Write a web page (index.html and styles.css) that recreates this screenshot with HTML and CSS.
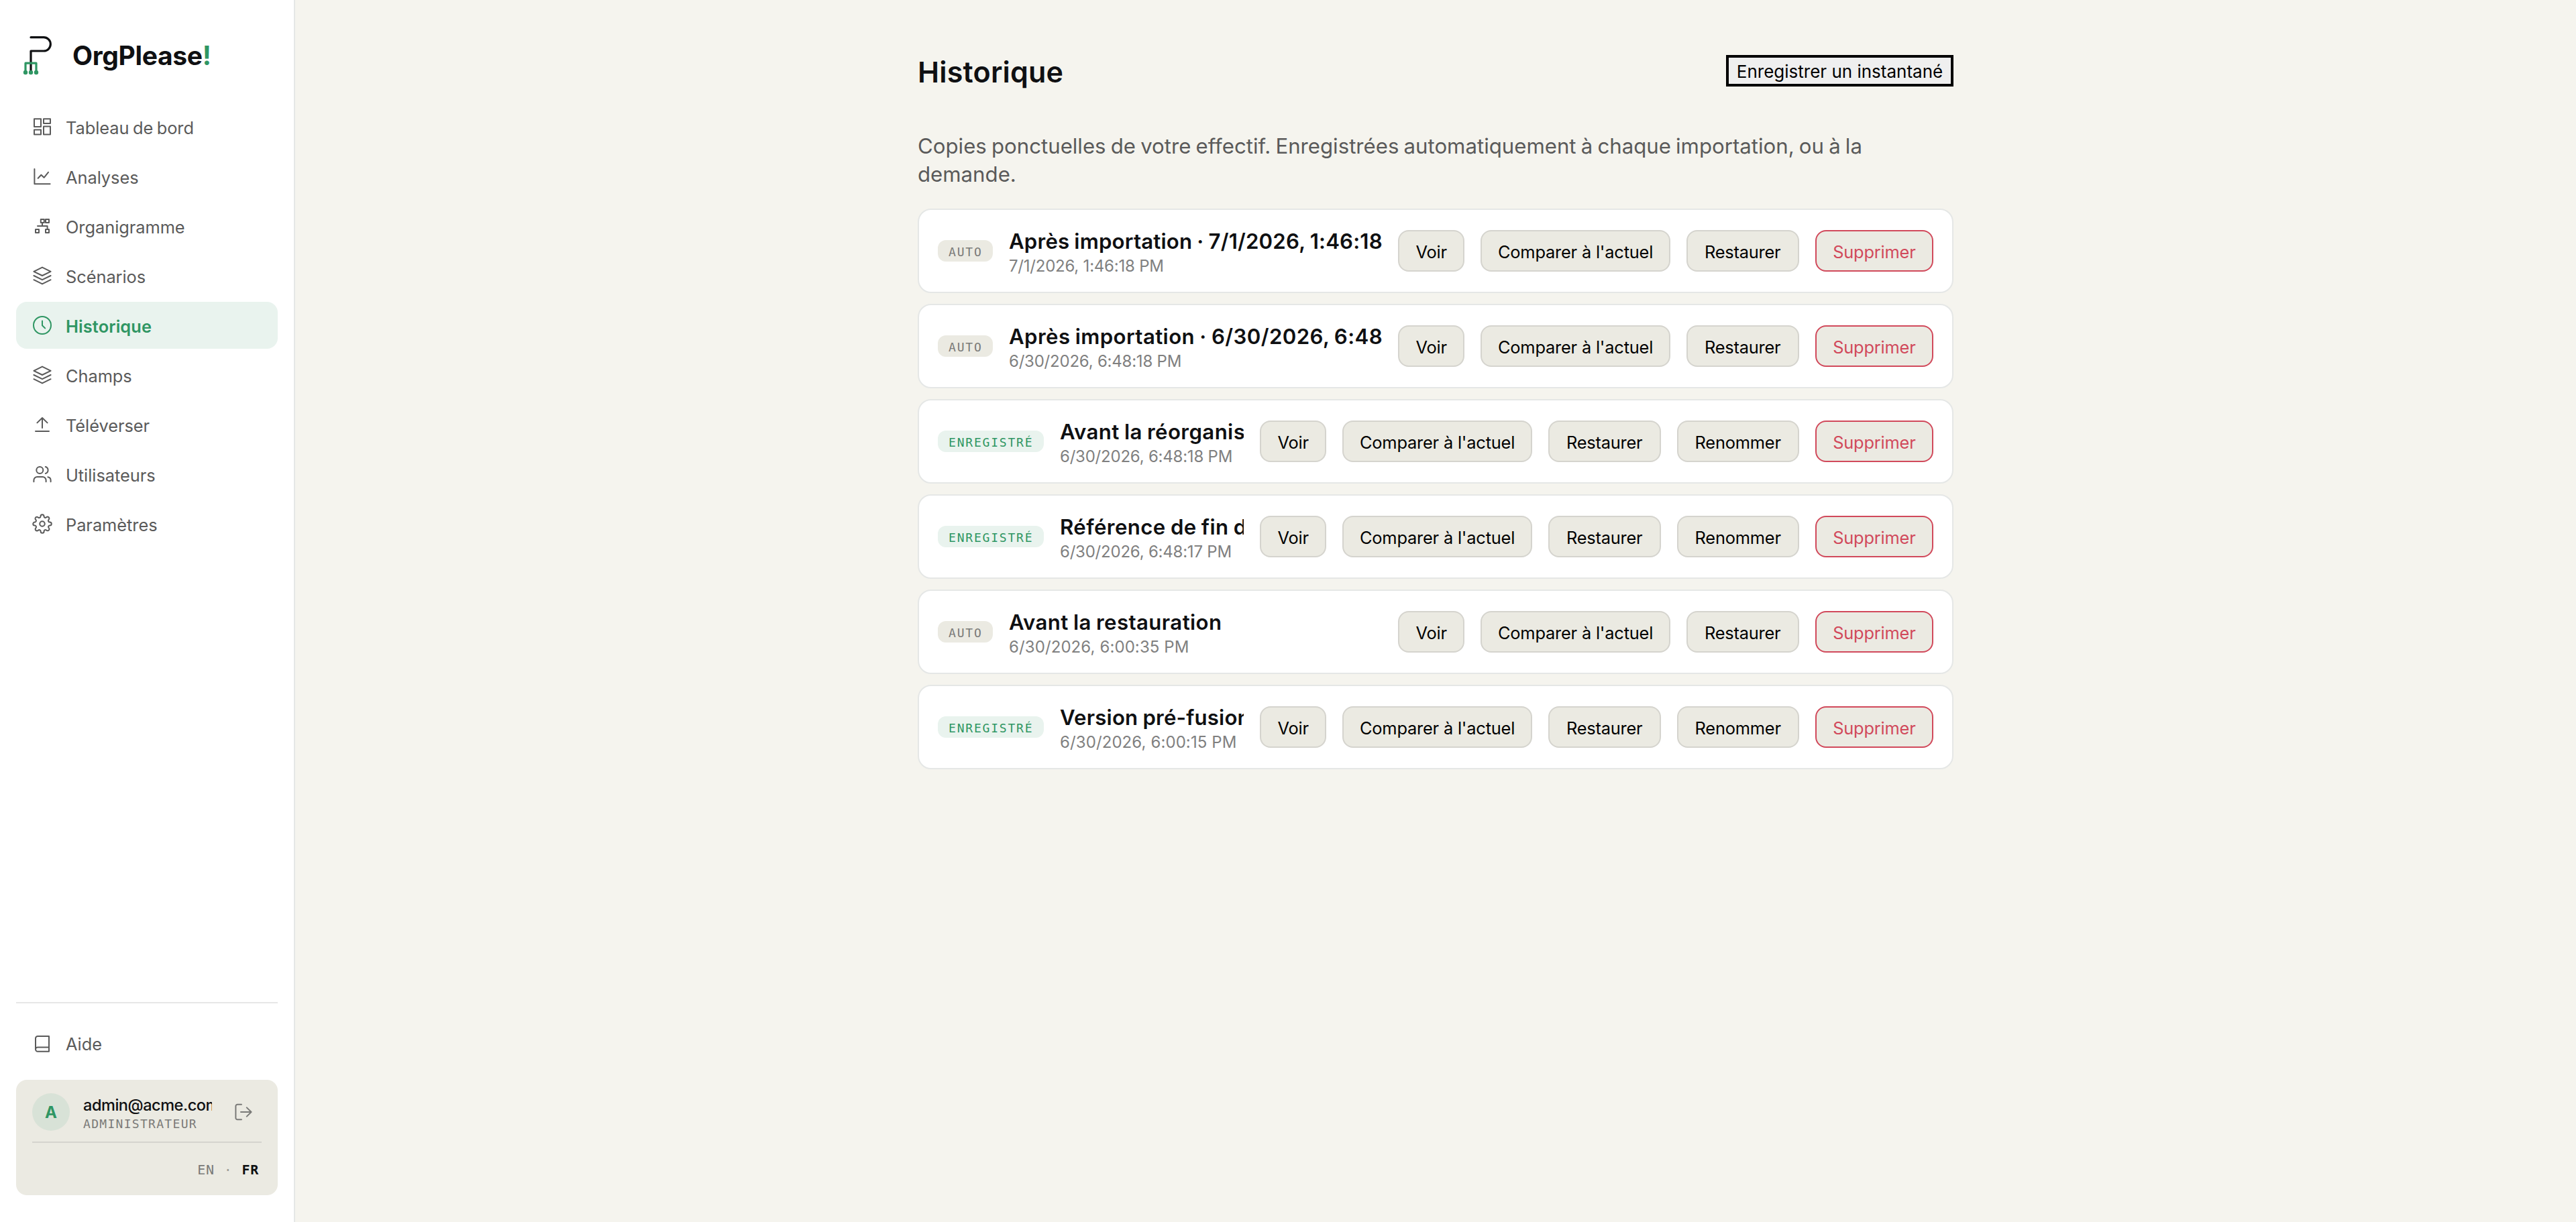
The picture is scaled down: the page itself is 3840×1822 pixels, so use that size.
FILE: index.html
```
<!DOCTYPE html>
<html lang="fr">
<head>
	<meta charset="utf-8">
	<title>Historique - OrgPlease!</title>
	<link rel="stylesheet" href="styles.css">
</head>
<body>
	<div class="app">
		<aside class="sidebar">
			<div class="brand">
				<svg class="logo" viewBox="0 0 48 64">
					<path class="ink" d="M14 5.7H33.2A10.15 10.15 0 0 1 33.2 26H14V55"/>
					<path class="leaf" d="M6 58V44.2H22V58"/>
					<g class="dots"><circle cx="6" cy="58" r="3.2"/><circle cx="14" cy="58" r="3.2"/><circle cx="22" cy="58" r="3.2"/></g>
				</svg>
				<div class="name">OrgPlease<span>!</span></div>
			</div>
			<nav class="menu">
				<a class="item">
					<svg class="icon" viewBox="0 0 30 30"><rect x="3" y="3.3" width="10" height="11.8"/><rect x="17" y="3.3" width="10" height="6.8"/><rect x="3" y="19.6" width="10" height="6.8"/><rect x="17" y="14.6" width="10" height="11.8"/></svg>
					<span>Tableau de bord</span>
				</a>
				<a class="item">
					<svg class="icon" viewBox="0 0 30 30"><path d="M3.4 4V26.3H26.6M8.7 17.7L13.4 12.8L17.6 16.8L24 8.8"/></svg>
					<span>Analyses</span>
				</a>
				<a class="item">
					<svg class="icon" viewBox="0 0 30 30"><rect x="12.8" y="5" width="5" height="5"/><rect x="20" y="5" width="5" height="5"/><rect x="5" y="20" width="5" height="5"/><rect x="20" y="20" width="5" height="5"/><path d="M15 10V15M8 15H22.6V20"/></svg>
					<span>Organigramme</span>
				</a>
				<a class="item">
					<svg class="icon" viewBox="0 0 30 30"><path d="M15 2.6L27.6 8.8L15 15L2.4 8.8ZM2.4 15L15 21.2L27.6 15M2.4 21.2L15 27.4L27.6 21.2"/></svg>
					<span>Scénarios</span>
				</a>
				<a class="item active">
					<svg class="icon" viewBox="0 0 30 30"><circle cx="15" cy="15" r="13"/><path d="M15 8.6V15.2L19.2 19.4"/></svg>
					<span>Historique</span>
				</a>
				<a class="item">
					<svg class="icon" viewBox="0 0 30 30"><path d="M15 2.6L27.6 8.8L15 15L2.4 8.8ZM2.4 15L15 21.2L27.6 15M2.4 21.2L15 27.4L27.6 21.2"/></svg>
					<span>Champs</span>
				</a>
				<a class="item">
					<svg class="icon" viewBox="0 0 30 30"><path d="M15 20V5.2M7.4 12.4L15 5L22.6 12.4M5 25H25"/></svg>
					<span>Téléverser</span>
				</a>
				<a class="item">
					<svg class="icon" viewBox="0 0 30 30"><circle cx="11.3" cy="9" r="5"/><path d="M2.4 26.3V24A5 5 0 0 1 7.4 19H15.6A5 5 0 0 1 20.6 24V26.3M19.8 4A5.2 5.2 0 0 1 19.8 14M23.4 19.2A5 5 0 0 1 27.6 24V26.3"/></svg>
					<span>Utilisateurs</span>
				</a>
				<a class="item">
					<svg class="icon gear" viewBox="0 0 24 24"><circle cx="12" cy="12" r="3"/><path d="M19.4 15a1.65 1.65 0 0 0 .33 1.82l.06.06a2 2 0 0 1 0 2.83 2 2 0 0 1-2.83 0l-.06-.06a1.65 1.65 0 0 0-1.82-.33 1.65 1.65 0 0 0-1 1.51V21a2 2 0 0 1-2 2 2 2 0 0 1-2-2v-.09A1.65 1.65 0 0 0 9 19.4a1.65 1.65 0 0 0-1.82.33l-.06.06a2 2 0 0 1-2.83 0 2 2 0 0 1 0-2.83l.06-.06a1.65 1.65 0 0 0 .33-1.82 1.65 1.65 0 0 0-1.51-1H3a2 2 0 0 1-2-2 2 2 0 0 1 2-2h.09A1.65 1.65 0 0 0 4.6 9a1.65 1.65 0 0 0-.33-1.82l-.06-.06a2 2 0 0 1 0-2.83 2 2 0 0 1 2.83 0l.06.06a1.65 1.65 0 0 0 1.82.33H9a1.65 1.65 0 0 0 1-1.51V3a2 2 0 0 1 2-2 2 2 0 0 1 2 2v.09a1.65 1.65 0 0 0 1 1.51 1.65 1.65 0 0 0 1.82-.33l.06-.06a2 2 0 0 1 2.83 0 2 2 0 0 1 0 2.83l-.06.06a1.65 1.65 0 0 0-.33 1.82V9a1.65 1.65 0 0 0 1.51 1H21a2 2 0 0 1 2 2 2 2 0 0 1-2 2h-.09a1.65 1.65 0 0 0-1.51 1z"/></svg>
					<span>Paramètres</span>
				</a>
			</nav>
			<div class="bottom">
				<a class="item">
					<svg class="icon" viewBox="0 0 30 30"><path d="M5 24.6A3.2 3.2 0 0 1 8.2 21.4H25M8.2 5H25V27.8H8.2A3.2 3.2 0 0 1 5 24.6V8.2A3.2 3.2 0 0 1 8.2 5Z"/></svg>
					<span>Aide</span>
				</a>
				<div class="account">
					<div class="user">
						<div class="avatar">A</div>
						<div class="who">
							<div class="email">admin@acme.com</div>
							<div class="role">ADMINISTRATEUR</div>
						</div>
						<svg class="icon logout" viewBox="0 0 30 30"><path d="M12 3.7H6A2.6 2.6 0 0 0 3.4 6.3V23.7A2.6 2.6 0 0 0 6 26.3H12M11 15H26.6M19.8 8.4L26.6 15L19.8 21.6"/></svg>
					</div>
					<div class="lang">
						<span>EN</span>
						<i>·</i>
						<b>FR</b>
					</div>
				</div>
			</div>
		</aside>
		<main class="main">
			<div class="content">
				<div class="head">
					<h1>Historique</h1>
					<button class="save">Enregistrer un instantané</button>
				</div>
				<p class="intro">Copies ponctuelles de votre effectif. Enregistrées automatiquement à chaque importation, ou à la demande.</p>
				<div class="list">
					<div class="card">
						<span class="badge">AUTO</span>
						<div class="text">
							<div class="title tight">Après importation · 7/1/2026, 1:46:18 PM</div>
							<div class="date">7/1/2026, 1:46:18 PM</div>
						</div>
						<button class="btn view">Voir</button>
						<button class="btn compare">Comparer à l'actuel</button>
						<button class="btn restore">Restaurer</button>
						<button class="btn delete">Supprimer</button>
					</div>
					<div class="card">
						<span class="badge">AUTO</span>
						<div class="text">
							<div class="title">Après importation · 6/30/2026, 6:48:18 PM</div>
							<div class="date">6/30/2026, 6:48:18 PM</div>
						</div>
						<button class="btn view">Voir</button>
						<button class="btn compare">Comparer à l'actuel</button>
						<button class="btn restore">Restaurer</button>
						<button class="btn delete">Supprimer</button>
					</div>
					<div class="card">
						<span class="badge saved">ENREGISTRÉ</span>
						<div class="text">
							<div class="title">Avant la réorganisation</div>
							<div class="date">6/30/2026, 6:48:18 PM</div>
						</div>
						<button class="btn view">Voir</button>
						<button class="btn compare">Comparer à l'actuel</button>
						<button class="btn restore">Restaurer</button>
						<button class="btn rename">Renommer</button>
						<button class="btn delete">Supprimer</button>
					</div>
					<div class="card">
						<span class="badge saved">ENREGISTRÉ</span>
						<div class="text">
							<div class="title">Référence de fin d'année</div>
							<div class="date">6/30/2026, 6:48:17 PM</div>
						</div>
						<button class="btn view">Voir</button>
						<button class="btn compare">Comparer à l'actuel</button>
						<button class="btn restore">Restaurer</button>
						<button class="btn rename">Renommer</button>
						<button class="btn delete">Supprimer</button>
					</div>
					<div class="card">
						<span class="badge">AUTO</span>
						<div class="text">
							<div class="title">Avant la restauration</div>
							<div class="date wide">6/30/2026, 6:00:35 PM</div>
						</div>
						<button class="btn view">Voir</button>
						<button class="btn compare">Comparer à l'actuel</button>
						<button class="btn restore">Restaurer</button>
						<button class="btn delete">Supprimer</button>
					</div>
					<div class="card">
						<span class="badge saved">ENREGISTRÉ</span>
						<div class="text">
							<div class="title tight">Version pré-fusion</div>
							<div class="date wide">6/30/2026, 6:00:15 PM</div>
						</div>
						<button class="btn view">Voir</button>
						<button class="btn compare">Comparer à l'actuel</button>
						<button class="btn restore">Restaurer</button>
						<button class="btn rename">Renommer</button>
						<button class="btn delete">Supprimer</button>
					</div>
				</div>
			</div>
		</main>
	</div>
</body>
</html>
```
FILE: styles.css
```
* {
	margin: 0;
	padding: 0;
	box-sizing: border-box;
}
body {
	background: #f5f4ee;
	color: #0f1012;
	font-family: Inter, "Liberation Sans", sans-serif;
}
.app {
	display: flex;
	height: 1822px;
}

/* sidebar */
.sidebar {
	display: flex;
	flex-direction: column;
	flex: none;
	width: 440px;
	padding: 50px 24px 40px;
	background: #fff;
	border-right: 2px solid #e5e7e6;
}
.brand {
	display: flex;
	height: 64px;
	margin-bottom: 40px;
	padding-left: 8px;
}
.logo {
	width: 48px;
	height: 64px;
	fill: none;
	stroke-width: 3.2;
	stroke-linecap: round;
	stroke-linejoin: round;
}
.logo .ink {
	stroke: #0f1012;
}
.logo .leaf {
	stroke: #2f9663;
}
.logo .dots {
	fill: #2f9663;
}
.name {
	padding: 1px 0 0 28px;
	font-size: 39px;
	line-height: 64px;
	font-weight: 700;
	letter-spacing: -0.35px;
}
.name span {
	color: #2f9663;
}
.menu {
	display: flex;
	flex-direction: column;
	gap: 4px;
}
.item {
	display: flex;
	align-items: center;
	gap: 20px;
	height: 70px;
	padding: 0 24px;
	border-radius: 16px;
	color: #5a5a5a;
	font-size: 25.4px;
	letter-spacing: -0.05px;
	word-spacing: -1.6px;
}
.item span {
	padding-top: 3px;
}
.item.active {
	background: #e9f3ee;
	color: #2f9663;
	font-weight: 600;
	letter-spacing: 0.1px;
}
.icon {
	flex: none;
	width: 30px;
	height: 30px;
	overflow: visible;
	fill: none;
	stroke: currentColor;
	stroke-width: 2;
	stroke-linecap: round;
	stroke-linejoin: round;
}
.icon.gear {
	stroke-width: 1.6;
}
.bottom {
	margin-top: auto;
	padding-top: 24px;
	border-top: 2px solid #e7e7e7;
}
.account {
	height: 172px;
	margin-top: 20px;
	padding: 20px 24px;
	background: #ebeae2;
	border-radius: 16px;
}
.user {
	display: flex;
	height: 74px;
	border-bottom: 2px solid #d5d4ce;
}
.avatar {
	flex: none;
	width: 56px;
	height: 56px;
	padding-top: 1px;
	background: #d8e2d7;
	border-radius: 50%;
	color: #2f9663;
	font-size: 24px;
	line-height: 56px;
	font-weight: 700;
	text-align: center;
}
.who {
	width: 192px;
	margin-left: 20px;
	overflow: hidden;
}
.email {
	padding-top: 2px;
	font-size: 23.5px;
	line-height: 31px;
	font-weight: 500;
	letter-spacing: -0.45px;
}
.role {
	color: #7a7a78;
	font: 18px/25px "DejaVu Sans Mono", monospace;
	letter-spacing: 1.3px;
}
.logout {
	margin: 13px 0 0 32px;
	color: #7a7a78;
}
.lang {
	display: flex;
	justify-content: flex-end;
	gap: 14px;
	padding: 27px 4px 0 0;
	color: #7a7a78;
	font: 20px/26px "DejaVu Sans Mono", monospace;
	letter-spacing: 0.7px;
}
.lang i {
	font-style: normal;
	opacity: 0.7;
}
.lang b {
	color: #0f1012;
}

/* content */
.main {
	flex: 1;
	padding-top: 80px;
}
.content {
	width: 1544px;
	margin: 0 auto;
}
.head {
	display: flex;
	align-items: flex-start;
	justify-content: space-between;
}
h1 {
	font-size: 43px;
	line-height: 54px;
	font-weight: 600;
	letter-spacing: 0.2px;
}
.save {
	width: 339px;
	height: 47px;
	margin-top: 2px;
	padding-top: 2px;
	background: #efefef;
	border: 4px solid #000;
	color: #000;
	font-family: inherit;
	font-size: 26px;
	line-height: 38px;
	white-space: nowrap;
}
.intro {
	margin: 63px 0 30px;
	color: #5a5a5a;
	font-size: 31.2px;
	line-height: 42px;
	word-spacing: -1.6px;
}
.list {
	display: flex;
	flex-direction: column;
	gap: 16px;
}
.card {
	display: flex;
	align-items: center;
	gap: 24px;
	height: 126px;
	padding: 0 28px;
	background: #fff;
	border: 2px solid #e5e7e6;
	border-radius: 20px;
}
.badge {
	flex: none;
	width: 82px;
	height: 32px;
	padding: 2px 0 0 16px;
	background: #ebeae2;
	border-radius: 12px;
	color: #7a7a78;
	font: 18px/32px "DejaVu Sans Mono", monospace;
	letter-spacing: 1.8px;
}
.badge.saved {
	width: 158px;
	background: #e9f3ee;
	color: #2f9663;
}
.text {
	flex: 1;
	min-width: 0;
	padding-top: 3px;
	overflow: hidden;
	white-space: nowrap;
}
.title {
	font-size: 31.2px;
	line-height: 42px;
	font-weight: 600;
	letter-spacing: 0.4px;
	word-spacing: -1px;
}
.title.tight {
	letter-spacing: 0.18px;
}
.date {
	color: #808080;
	font-size: 24px;
	line-height: 31px;
	letter-spacing: -0.22px;
}
.date.wide {
	letter-spacing: 0.1px;
}
.btn {
	flex: none;
	height: 62px;
	padding-top: 3px;
	background: #ebeae2;
	border: 2px solid #d5d4ce;
	border-radius: 16px;
	color: #000;
	font-family: inherit;
	font-size: 25.4px;
	letter-spacing: -0.2px;
	white-space: nowrap;
}
.btn.view {
	width: 99.4px;
}
.btn.compare {
	width: 282.3px;
}
.btn.restore {
	width: 168px;
}
.btn.rename {
	width: 182px;
}
.btn.delete {
	width: 176.3px;
	border-color: #d1495b;
	color: #d1495b;
}
```
